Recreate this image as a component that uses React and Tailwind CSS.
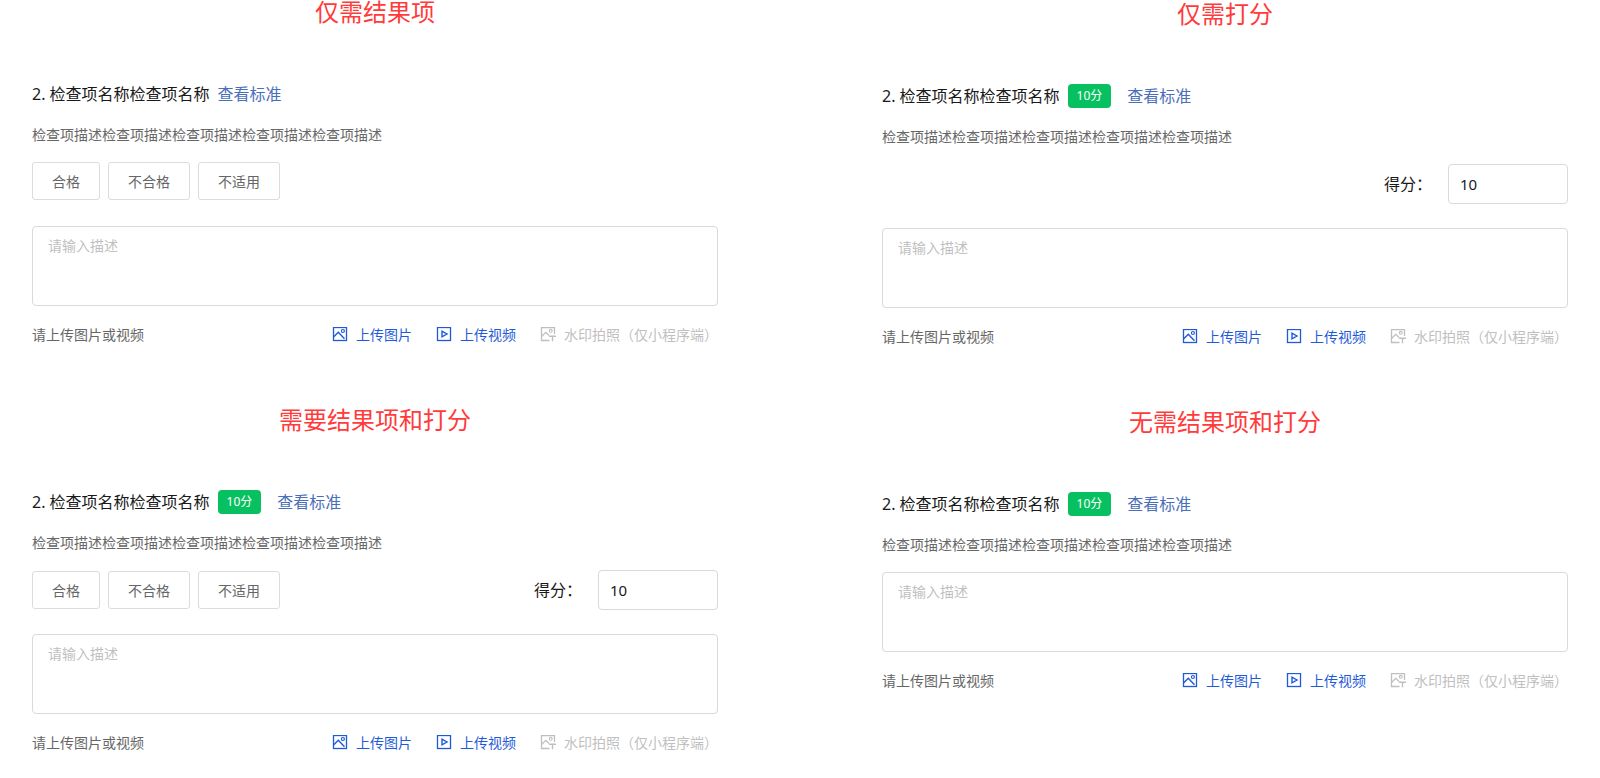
import { useId, useState } from 'react';

const resultados = ['合格', '不合格', '不适用'];

const ImageIcon = () => (
  <svg className="size-4" viewBox="0 1 16 16" fill="none" stroke="currentColor" aria-hidden="true">
    <rect x="1.5" y="1.5" width="13" height="13" strokeWidth="1.3" />
    <path d="M1.8 10.8 L6.3 6.3 L12.5 12.8" strokeWidth="1.4" />
    <circle cx="10.9" cy="5" r="1.5" strokeWidth="1.2" />
  </svg>
);

const VideoIcon = () => (
  <svg className="size-4" viewBox="0 1 16 16" fill="none" stroke="currentColor" aria-hidden="true">
    <rect x="1.5" y="1.5" width="13" height="13" strokeWidth="1.3" />
    <path d="M6 5.2 V10.8 L11 8 Z" strokeWidth="1.4" />
  </svg>
);

const WatermarkIcon = () => (
  <svg className="size-4" viewBox="0 1 16 16" fill="none" stroke="currentColor" aria-hidden="true">
    <path d="M14.5 8 V1.5 H1.5 V14.5 H9.5" strokeWidth="1.3" />
    <path d="M1.8 10.2 L5.8 6.3 L9 9.5" strokeWidth="1.3" />
    <circle cx="10.8" cy="4.8" r="1.4" strokeWidth="1.1" />
    <path d="M9 10.3 H16 M12.5 10.3 V15.2" strokeWidth="1.4" />
  </svg>
);

const CheckItem = ({ title, showBadge, showResults, showScore }) => {
  const [result, setResult] = useState('');
  const [score, setScore] = useState('10');
  const scoreId = useId();

  return (
    <section>
      <h2 className="text-center text-2xl leading-6 text-[#ff3b3b]">{title}</h2>

      <div className="mt-[58px] flex h-6 items-center text-base leading-6">
        <h3 className="text-[#191919]">2. 检查项名称检查项名称</h3>
        {showBadge && (
          <span className="mr-2 ml-2 rounded bg-[#07c160] px-[9px] text-xs leading-6 text-white">10分</span>
        )}
        <a href="#" className="ml-2 text-[#4a6fba]">查看标准</a>
      </div>

      <p className="mt-[18px] text-sm leading-[22px] text-[#666666]">
        检查项描述检查项描述检查项描述检查项描述检查项描述
      </p>

      {/* Results and score */}
      {(showResults || showScore) && (
        <div className={`mt-4 mb-6 flex min-h-10 ${showScore ? 'items-center' : 'items-start'}`}>
          {showResults && (
            <div className="flex gap-2">
              {resultados.map(r => (
                <button
                  key={r}
                  type="button"
                  onClick={() => setResult(r)}
                  className={`h-[38px] rounded-[3px] border px-[19px] pt-0.5 text-sm ${
                    result === r ? 'border-[#2563d9] text-[#2563d9]' : 'border-[#dcdcdc] text-[#666666]'
                  }`}
                >
                  {r}
                </button>
              ))}
            </div>
          )}
          {showScore && (
            <div className="ml-auto flex items-center gap-4">
              <label htmlFor={scoreId} className="text-base text-[#191919]">得分：</label>
              <input
                id={scoreId}
                type="text"
                value={score}
                onChange={e => setScore(e.target.value)}
                className="h-10 w-[120px] rounded border border-[#d9d9d9] px-[11px] text-[15px] text-[#191919]"
              />
            </div>
          )}
        </div>
      )}

      <textarea
        aria-label="描述"
        placeholder="请输入描述"
        className={`block h-20 w-full resize-none rounded border border-[#d9d9d9] px-[15px] py-2 text-sm leading-[22px] text-[#191919] placeholder:text-[#bfbfbf] ${
          showResults || showScore ? '' : 'mt-4'
        }`}
      />

      {/* Uploads */}
      <div className="mt-[18px] flex items-center justify-between text-sm leading-[22px]">
        <span className="text-[#666666]">请上传图片或视频</span>
        <div className="flex gap-6">
          <button type="button" className="flex items-center gap-2 text-[#1f5bd8]">
            <ImageIcon /> 上传图片
          </button>
          <button type="button" className="flex items-center gap-2 text-[#1f5bd8]">
            <VideoIcon /> 上传视频
          </button>
          <button type="button" disabled className="flex items-center gap-2 text-[#bfbfbf]">
            <WatermarkIcon /> 水印拍照（仅小程序端）
          </button>
        </div>
      </div>
    </section>
  );
};

const App = () => (
  <main
    lang="zh-CN"
    className="grid min-h-screen grid-cols-2 gap-x-[164px] bg-white px-8 font-['Noto_Sans','Noto_Sans_CJK_SC',sans-serif]"
  >
    <div className="flex flex-col gap-[62px]">
      <CheckItem title="仅需结果项" showResults />
      <CheckItem title="需要结果项和打分" showBadge showResults showScore />
    </div>
    <div className="flex flex-col gap-[62px] pt-0.5">
      <CheckItem title="仅需打分" showBadge showScore />
      <CheckItem title="无需结果项和打分" showBadge />
    </div>
  </main>
);

export default App;
